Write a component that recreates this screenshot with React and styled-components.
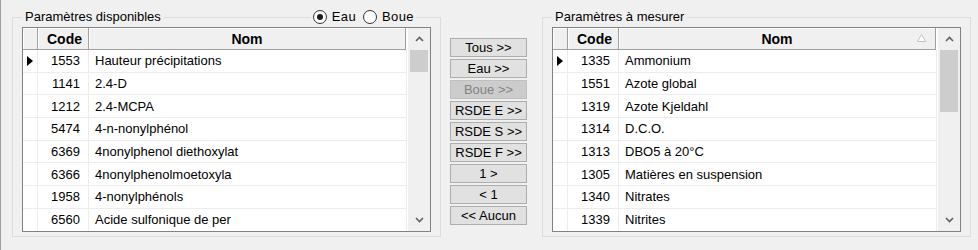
import React from 'react';
import styled, { createGlobalStyle } from 'styled-components';

const GlobalStyle = createGlobalStyle`
  body {
    margin: 0;
    background: #f0f0f0;
    font-family: "Liberation Sans", Arial, sans-serif;
    font-size: 13px;
    color: #000;
  }
`;

const available = [
  ['1553', 'Hauteur précipitations'],
  ['1141', '2.4-D'],
  ['1212', '2.4-MCPA'],
  ['5474', '4-n-nonylphénol'],
  ['6369', '4nonylphenol diethoxylat'],
  ['6366', '4nonylphenolmoetoxyla'],
  ['1958', '4-nonylphénols'],
  ['6560', 'Acide sulfonique de per'],
];

const measured = [
  ['1335', 'Ammonium'],
  ['1551', 'Azote global'],
  ['1319', 'Azote Kjeldahl'],
  ['1314', 'D.C.O.'],
  ['1313', 'DBO5 à 20°C'],
  ['1305', 'Matières en suspension'],
  ['1340', 'Nitrates'],
  ['1339', 'Nitrites'],
];

const buttons = [
  { label: 'Tous >>' },
  { label: 'Eau >>' },
  { label: 'Boue >>', disabled: true },
  { label: 'RSDE E >>' },
  { label: 'RSDE S >>' },
  { label: 'RSDE F >>' },
  { label: '1 >' },
  { label: '< 1' },
  { label: '<< Aucun' },
];

function ParamGrid({ rows, thumbHeight, sorted }) {
  return (
    <Grid>
      <Table>
        <Row header>
          <HeadCell />
          <HeadCell>Code</HeadCell>
          <HeadCell center>
            Nom
            {sorted && (
              <SortMark width="9" height="8" viewBox="0 0 9 8">
                <polygon points="4.5,0.5 8.5,7.5 0.5,7.5" fill="#fff" stroke="#c4c4c4" />
              </SortMark>
            )}
          </HeadCell>
        </Row>
        {rows.map(([code, name], i) => (
          <Row key={code}>
            <Cell>
              {i === 0 && (
                <svg width="6" height="10" viewBox="0 0 6 10">
                  <polygon points="0,0 6,5 0,10" fill="#000" />
                </svg>
              )}
            </Cell>
            <Cell right>{code}</Cell>
            <Cell>{name}</Cell>
          </Row>
        ))}
      </Table>
      <ScrollBar>
        <Arrow>
          <svg width="9" height="6" viewBox="0 0 9 6">
            <polyline points="1,5 4.5,1.5 8,5" fill="none" stroke="#606060" strokeWidth="1.6" />
          </svg>
        </Arrow>
        <Thumb style={{ height: thumbHeight }} />
        <Track />
        <Arrow>
          <svg width="9" height="6" viewBox="0 0 9 6">
            <polyline points="1,1 4.5,4.5 8,1" fill="none" stroke="#606060" strokeWidth="1.6" />
          </svg>
        </Arrow>
      </ScrollBar>
    </Grid>
  );
}

export default function App() {
  return (
    <>
      <GlobalStyle />
      <Window>
        <Group>
          <Legend>Paramètres disponibles</Legend>
          <RadioGroup>
            <RadioLabel>
              <Radio checked />
              Eau
            </RadioLabel>
            <RadioLabel>
              <Radio />
              Boue
            </RadioLabel>
          </RadioGroup>
          <ParamGrid rows={available} thumbHeight={22} />
        </Group>

        <ButtonColumn>
          {buttons.map((b) => (
            <MoveButton key={b.label} disabled={b.disabled}>
              {b.label}
            </MoveButton>
          ))}
        </ButtonColumn>

        <Group>
          <Legend>Paramètres à mesurer</Legend>
          <ParamGrid rows={measured} thumbHeight={62} sorted />
        </Group>
      </Window>
    </>
  );
}

const Window = styled.div`
  display: flex;
  align-items: flex-start;
  height: 250px;
  box-sizing: border-box;
  border-left: 1px solid #a0a0a0;
  padding-left: 11px;
  background: #f0f0f0;
`;

const Group = styled.fieldset`
  position: relative;
  flex: none;
  box-sizing: border-box;
  width: 429px;
  min-width: 0;
  margin: 10px 0 0;
  padding: 3px 9px 4px;
  border: 1px solid #dcdcdc;
`;

const Legend = styled.legend`
  padding: 0 3px;
  margin-left: 0;
  height: 14px;
  line-height: 14px;
  font-size: 13px;
`;

const RadioGroup = styled.div`
  position: absolute;
  top: -15px;
  right: 24px;
  display: flex;
  align-items: center;
  gap: 7px;
  padding: 0 2px;
  height: 15px;
  background: #f0f0f0;
`;

const RadioLabel = styled.label`
  display: flex;
  align-items: center;
  gap: 5px;
  line-height: 15px;
  letter-spacing: 0.4px;
`;

const Radio = styled.span`
  position: relative;
  flex: none;
  width: 14px;
  height: 14px;
  box-sizing: border-box;
  border: 1px solid #333;
  border-radius: 50%;
  background: #fff;

  &::after {
    content: '';
    display: ${(p) => (p.checked ? 'block' : 'none')};
    position: absolute;
    left: 3px;
    top: 3px;
    width: 6px;
    height: 6px;
    border-radius: 50%;
    background: #1a1a1a;
  }
`;

const Grid = styled.div`
  display: flex;
  height: 205px;
  box-sizing: border-box;
  border: 1px solid #828282;
  background: #fff;
`;

const Table = styled.div`
  flex: 1;
  display: flex;
  flex-direction: column;
  overflow: hidden;
`;

const Row = styled.div`
  display: grid;
  grid-template-columns: 15px 51px 1fr;
  flex: none;
  height: ${(p) => (p.header ? '22px' : '22.7px')};
  background: ${(p) => (p.header ? '#f0f0f0' : '#fff')};
  margin-right: ${(p) => (p.header ? '1px' : '0')};
`;

const HeadCell = styled.div`
  position: relative;
  display: flex;
  align-items: center;
  justify-content: ${(p) => (p.center ? 'center' : 'flex-end')};
  padding-right: ${(p) => (p.center ? '0' : '6px')};
  box-sizing: border-box;
  border-right: 1px solid #a0a0a0;
  border-bottom: 1px solid #a0a0a0;
  box-shadow: inset 1px 1px 0 #fff;
  font-size: 14px;
  font-weight: bold;
`;

const SortMark = styled.svg`
  position: absolute;
  right: 9px;
  top: 6px;
`;

const Cell = styled.div`
  display: flex;
  align-items: center;
  justify-content: ${(p) => (p.right ? 'flex-end' : 'flex-start')};
  padding: ${(p) => (p.right ? '0 8px 0 0' : '0 0 0 6px')};
  box-sizing: border-box;
  border-right: 1px solid #ececec;
  border-bottom: 1px solid #ececec;
  white-space: nowrap;
  overflow: hidden;

  &:first-child {
    padding-left: 4px;
  }
`;

const ScrollBar = styled.div`
  display: flex;
  flex-direction: column;
  width: 22px;
  margin-left: 1px;
  background: #f0f0f0;
`;

const Arrow = styled.div`
  display: flex;
  align-items: center;
  justify-content: center;
  height: 22px;
  flex: none;
`;

const Thumb = styled.div`
  margin: 0 2px;
  background: #cdcdcd;
  flex: none;
`;

const Track = styled.div`
  flex: 1;
`;

const ButtonColumn = styled.div`
  display: flex;
  flex-direction: column;
  flex: none;
  gap: 2px;
  width: 77px;
  margin: 38px 15px 0 9px;
`;

const MoveButton = styled.button`
  height: 19px;
  padding: 0;
  box-sizing: border-box;
  border: 1px solid ${(p) => (p.disabled ? '#bfbfbf' : '#adadad')};
  border-radius: 0;
  background: ${(p) => (p.disabled ? '#cccccc' : '#e1e1e1')};
  color: ${(p) => (p.disabled ? '#838383' : '#000')};
  font-family: "Liberation Sans", Arial, sans-serif;
  font-size: 13px;
  line-height: 17px;
  white-space: nowrap;
`;
